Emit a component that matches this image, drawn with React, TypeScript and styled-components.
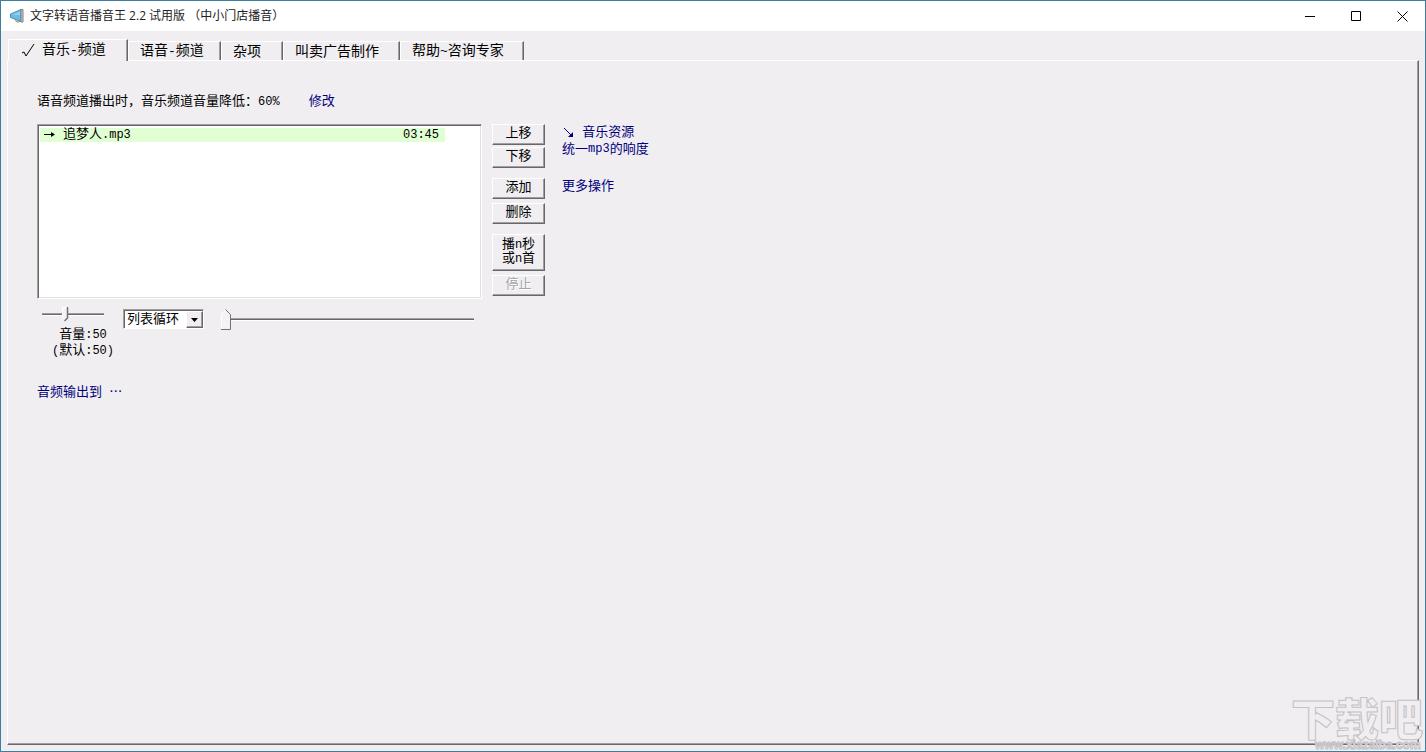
import React, { useState } from "react";
import styled, { createGlobalStyle, css } from "styled-components";

const face = "#f0eef1";
const dark = "#696769";
const mid = "#a09ea1";
const navy = "#00007c";

const raised = css`
  border: 1px solid #fff;
  border-right-color: ${dark};
  border-bottom-color: ${dark};
  box-shadow: inset -1px -1px ${mid};
`;

const sunken = css`
  border: 1px solid #fff;
  border-top-color: ${mid};
  border-left-color: ${mid};
  box-shadow: inset 1px 1px ${dark}, inset -1px -1px #e2e0e3;
`;

const Global = createGlobalStyle`
  * { box-sizing: border-box; }
  body { margin: 0; background: ${face}; }
  button, input, select { font: inherit; margin: 0; }
`;

const AppWindow = styled.div`
  position: relative;
  overflow: hidden;
  display: flex;
  flex-direction: column;
  min-height: 100vh;
  padding-bottom: 6px;
  border: 1px solid #3f7d9e;
  background: ${face};
  color: #000;
  font-family: "Liberation Mono", "Noto Sans CJK SC", monospace;
  font-size: 13px;
  line-height: 16px;
`;

const TitleBar = styled.header`
  display: flex;
  align-items: center;
  height: 30px;
  padding-left: 8px;
  background: #fff;
`;

const Title = styled.h1`
  flex: 1;
  margin: 0 0 0 5px;
  font-family: "Open Sans", "Noto Sans CJK SC", sans-serif;
  font-size: 12px;
  font-weight: 400;
  line-height: 18px;
  color: #222;
`;

const WindowButton = styled.button`
  display: flex;
  align-items: center;
  justify-content: center;
  width: 46px;
  height: 28px;
  padding: 0;
  border: 0;
  background: none;
`;

const Tabs = styled.nav`
  display: flex;
  align-items: flex-end;
  height: 29px;
  padding-left: 7px;
`;

const Tab = styled.button<{ $active?: boolean; $width: number }>`
  display: flex;
  align-items: center;
  width: ${(p) => p.$width}px;
  height: 19px;
  padding: 1px 0 0 11px;
  ${raised}
  border-bottom: 0;
  border-radius: 2px 0 0 0;
  box-shadow: inset -1px 0 ${mid};
  background: ${face};
  color: #000;
  font-size: 14px;
  line-height: 18px;
  white-space: nowrap;
  ${(p) =>
    p.$active &&
    css`
      position: relative;
      z-index: 1;
      height: 22px;
      margin-bottom: -1px;
      padding: 0 0 0 13px;
      gap: 7px;
    `}
`;

const TabDash = styled.span`
  font-size: 13px;
`;

const Panel = styled.main`
  flex: 1;
  margin: 0 6px;
  padding: 33px 29px;
  ${raised}
`;

const Latin = styled.span`
  font-size: 12px;
`;

const Ellipsis = styled.span`
  font-family: "Noto Sans CJK SC", sans-serif;
`;

const Notice = styled.p`
  display: flex;
  gap: 29px;
  margin: 0 0 14px;
`;

const Link = styled.a`
  color: ${navy};
  text-decoration: none;
  white-space: pre;
`;

const Columns = styled.div`
  display: flex;
  align-items: flex-start;
  gap: 10px;
`;

const Player = styled.section`
  width: 445px;
`;

const Playlist = styled.ul`
  height: 175px;
  margin: 0;
  padding: 3px 2px;
  ${sunken}
  background: #fff;
  list-style: none;
`;

const Track = styled.li`
  display: flex;
  align-items: center;
  width: 405px;
  height: 14px;
  padding: 0 6px 0 3px;
  background: #e0ffd2;
`;

const TrackName = styled.span`
  flex: 1;
  margin-left: 7px;
`;

const Controls = styled.div`
  display: flex;
  align-items: flex-start;
  padding: 10px 8px 0 5px;
`;

const VolumeGroup = styled.div`
  width: 81px;
`;

const VolumeLabel = styled.label`
  display: block;
  margin-top: 7px;
  padding-left: 1px;
  text-align: center;
`;

const volumeThumb = `url("data:image/svg+xml,%3Csvg xmlns='http://www.w3.org/2000/svg' width='7' height='15'%3E%3Cpath d='M0 0h6v11l-3 3l-3-3z' fill='%23f4f2f5'/%3E%3Cpath d='M.5 11V.5H5' fill='none' stroke='white'/%3E%3Cpath d='M5.5 0v11l-3 3' fill='none' stroke='%23737174' stroke-width='1.5'/%3E%3C/svg%3E")`;
const seekThumb = `url("data:image/svg+xml,%3Csvg xmlns='http://www.w3.org/2000/svg' width='11' height='21'%3E%3Cpath d='M0 5l4-5l5 5v15H0z' fill='%23f4f2f5'/%3E%3Cpath d='M.5 20V5l4-4' fill='none' stroke='white'/%3E%3Cpath d='M4.500 .5L9.500 5.500V20.500H0' fill='none' stroke='%23737174'/%3E%3C/svg%3E")`;

const Slider = styled.input<{ $kind: "volume" | "seek" }>`
  display: block;
  appearance: none;
  width: ${(p) => (p.$kind === "volume" ? "62px" : "auto")};
  flex: ${(p) => (p.$kind === "volume" ? "none" : "1")};
  height: ${(p) => (p.$kind === "volume" ? 11 : 21)}px;
  min-width: 0;
  background: linear-gradient(${mid} 0 1px, ${dark} 1px 2px, #fff 2px 3px) center / 100% 3px no-repeat;

  &::-webkit-slider-thumb {
    appearance: none;
    width: ${(p) => (p.$kind === "volume" ? 7 : 11)}px;
    height: ${(p) => (p.$kind === "volume" ? 15 : 21)}px;
    border: 0;
    background: ${(p) => (p.$kind === "volume" ? volumeThumb : seekThumb)} no-repeat;
  }
`;

const SelectBox = styled.div`
  position: relative;
  width: 81px;
  height: 20px;
  margin-right: 17px;
  padding: 1px 0 0 1px;
  ${sunken}
`;

const Select = styled.select`
  appearance: none;
  display: block;
  width: 100%;
  height: 17px;
  padding: 0 0 0 2px;
  border: 0;
  border-radius: 0;
  background: #fff;
  color: #000;
  line-height: 16px;
`;

const SelectArrow = styled.span`
  position: absolute;
  top: 1px;
  right: 0;
  display: flex;
  align-items: center;
  justify-content: center;
  width: 17px;
  height: 17px;
  ${raised}
  background: ${face};
  pointer-events: none;
`;

const OutputLine = styled.p`
  margin: 24px 0 0;
`;

const ButtonColumn = styled.div`
  display: flex;
  flex-direction: column;
  gap: 10px;
  width: 53px;
`;

const ButtonGroup = styled.div<{ $gap: number }>`
  display: flex;
  flex-direction: column;
  gap: ${(p) => p.$gap}px;
`;

const PushButton = styled.button<{ $tall?: boolean }>`
  height: ${(p) => (p.$tall ? 37 : 21)}px;
  padding: 0 0 1px;
  ${raised}
  background: ${face};
  color: #000;
  line-height: ${(p) => (p.$tall ? 13 : 16)}px;

  &:disabled {
    color: #a5a3a6;
    text-shadow: 1px 1px #fff;
  }
`;

const LinkColumn = styled.div`
  display: flex;
  flex-direction: column;
  margin-left: 7px;
  line-height: 17px;

  a {
    display: flex;
    align-items: center;
    height: 17px;
  }
`;

const LinkGap = styled.div`
  margin-top: 20px;
`;

const Watermark = styled.svg`
  position: absolute;
  right: 0;
  bottom: -1px;
  pointer-events: none;
`;

const tabs = [
  { label: ["音乐", "-", "频道"], width: 120 },
  { label: ["语音", "-", "频道"], width: 93 },
  { label: ["杂项"], width: 62 },
  { label: ["叫卖广告制作"], width: 117 },
  { label: ["帮助", "~", "咨询专家"], width: 124 },
];

function AppIcon() {
  return (
    <svg width="16" height="16" viewBox="0 0 16 16" aria-hidden="true">
      <path d="M6 10.500l1.500 3.500h3l-1-3z" fill="#e8ddd0" stroke="#a08f7c" />
      <path d="M1.500 6L12 1.500v12L1.500 9.500z" fill="#69bce9" stroke="#568dab" />
      <path d="M3 7L11 3.500v3.500z" fill="#8bd2f6" />
      <path d="M12 1.500h2v12.500h-2z" fill="#c9ccca" stroke="#80837f" />
    </svg>
  );
}

export default function App() {
  const [active, setActive] = useState(0);
  const [volume, setVolume] = useState(37);
  const [position, setPosition] = useState(0);

  return (
    <AppWindow lang="zh-CN">
      <Global />
      <TitleBar>
        <AppIcon />
        <Title>文字转语音播音王 2.2 试用版 （中小门店播音）</Title>
        <WindowButton aria-label="最小化">
          <svg width="10" height="11"><path d="M0 5.500h10" stroke="#000" /></svg>
        </WindowButton>
        <WindowButton aria-label="最大化">
          <svg width="10" height="10"><path d="M.5 .5h9v9h-9z" fill="none" stroke="#000" /></svg>
        </WindowButton>
        <WindowButton aria-label="关闭">
          <svg width="11" height="11"><path d="M.5 .5l10 10M10.500 .5l-10 10" stroke="#000" /></svg>
        </WindowButton>
      </TitleBar>

      <Tabs>
        {tabs.map((tab, i) => (
          <Tab key={i} $active={i === active} $width={tab.width} onClick={() => setActive(i)}>
            {i === active && (
              <svg width="13" height="13" aria-hidden="true">
                <path d="M0 9l2-1l2 4L12 0" fill="none" stroke="#000" />
              </svg>
            )}
            <span>
              {tab.label[0]}
              {tab.label[1] && <TabDash>{tab.label[1]}</TabDash>}
              {tab.label[2]}
            </span>
          </Tab>
        ))}
      </Tabs>

      <Panel>
        <Notice>
          <span>语音频道播出时，音乐频道音量降低：<Latin>60%</Latin></span>
          <Link href="#reduce">修改</Link>
        </Notice>

        <Columns>
          <Player>
            <Playlist>
              <Track>
                <svg width="13" height="9" aria-hidden="true">
                  <path d="M1 3.500h10" stroke="#000" />
                  <path d="M8 1l4 2.500L8 6z" fill="#000" />
                </svg>
                <TrackName>追梦人<Latin>.mp3</Latin></TrackName>
                <Latin>03:45</Latin>
              </Track>
            </Playlist>
            <Controls>
              <VolumeGroup>
                <Slider
                  id="volume" $kind="volume" type="range" min={0} max={100}
                  value={volume} onChange={(e) => setVolume(Number(e.target.value))}
                />
                <VolumeLabel htmlFor="volume">
                  音量<Latin>:50</Latin>
                  <br />
                  <Latin>(</Latin>默认<Latin>:50)</Latin>
                </VolumeLabel>
              </VolumeGroup>
              <SelectBox>
                <Select aria-label="播放模式">
                  <option>列表循环</option>
                </Select>
                <SelectArrow>
                  <svg width="7" height="4"><path d="M0 0h7L3.500 4z" fill="#000" /></svg>
                </SelectArrow>
              </SelectBox>
              <Slider
                aria-label="播放进度" $kind="seek" type="range" min={0} max={100}
                value={position} onChange={(e) => setPosition(Number(e.target.value))}
              />
            </Controls>
            <OutputLine>
              <Link href="#output">音频输出到<Latin> </Latin><Ellipsis>…</Ellipsis></Link>
            </OutputLine>
          </Player>

          <ButtonColumn>
            <ButtonGroup $gap={2}>
              <PushButton>上移</PushButton>
              <PushButton>下移</PushButton>
            </ButtonGroup>
            <ButtonGroup $gap={4}>
              <PushButton>添加</PushButton>
              <PushButton>删除</PushButton>
            </ButtonGroup>
            <ButtonGroup $gap={4}>
              <PushButton $tall>播<Latin>n</Latin>秒<br />或<Latin>n</Latin>首</PushButton>
              <PushButton disabled>停止</PushButton>
            </ButtonGroup>
          </ButtonColumn>

          <LinkColumn>
            <Link href="#music">
              <svg width="13" height="11" aria-hidden="true">
                <path d="M2 1l8 8" stroke={navy} />
                <path d="M11 5v5H6z" fill={navy} />
              </svg>
              <Latin> </Latin>音乐资源
            </Link>
            <Link href="#loudness">统一<Latin>mp3</Latin>的响度</Link>
            <LinkGap>
              <Link href="#more">更多操作</Link>
            </LinkGap>
          </LinkColumn>
        </Columns>
      </Panel>

      <Watermark width="136" height="76" aria-hidden="true">
        <text
          x="2" y="60" fontSize="44" fontWeight="900" fill={face} stroke="#c3c1c4"
          fontFamily="'Noto Sans CJK SC', sans-serif"
        >
          下载吧
        </text>
        <text
          x="26" y="73" fontSize="12" fontWeight="700" fill={face} stroke="#c3c1c4"
          fontFamily="'Liberation Sans', sans-serif"
        >
          www.xiazaiba.com
        </text>
      </Watermark>
    </AppWindow>
  );
}
